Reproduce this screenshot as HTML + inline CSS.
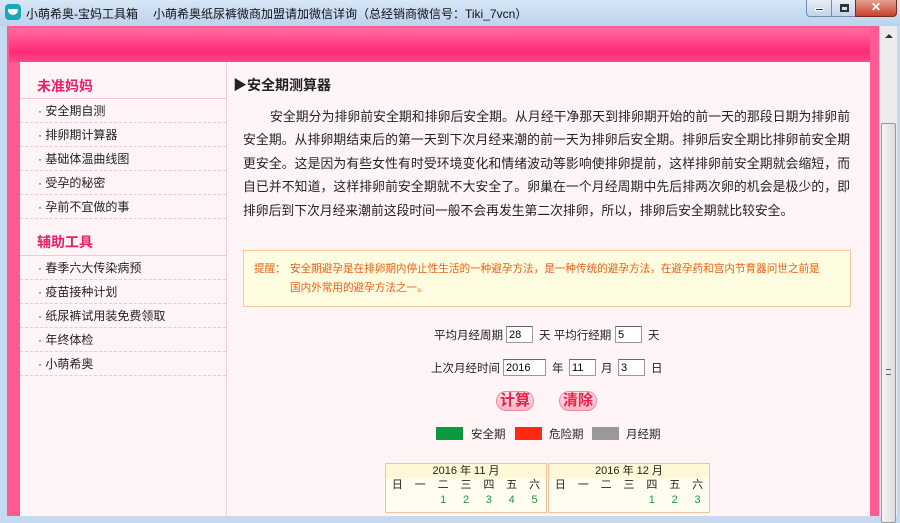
<!DOCTYPE html>
<html><head><meta charset="utf-8"><style>
*{margin:0;padding:0;box-sizing:border-box}
body{width:900px;height:506px;overflow:hidden;position:relative;background:#c5daf0;font-family:"Liberation Sans","Noto Sans CJK SC",sans-serif;color:#222}
.abs{position:absolute}
#title{left:0;top:0;width:900px;height:26px;background:linear-gradient(#d6e6f7,#bcd3ec)}
#title .t{top:5px;font-size:12px;color:#111;white-space:nowrap}
#frame{left:7px;top:26px;width:872px;height:490px;background:#ff5a91}
#hdr{left:9px;top:28px;width:861px;height:34px;background:linear-gradient(#ff6c9e,#ff2a78 70%,#ff4a88)}
#panel{left:20px;top:62px;width:850px;height:454px;background:#fff5f7}
#side{left:20px;top:62px;width:207px;height:454px;border-right:1px solid #f2cfd7}
.h{position:absolute;left:17px;font-size:14px;font-weight:bold;color:#e81f68}
.it{position:absolute;left:0;width:206px;height:24px;border-bottom:1px dashed #f5c6d2;font-size:12px;line-height:24px;padding-left:18px;color:#222}
.hl{position:absolute;left:0;width:206px;border-top:1px solid #f5c6d2}
#scroll{left:879px;top:26px;width:18px;height:490px;background:#ececec;border-left:1px solid #d8d8d8}
.body{left:243px;width:607px;font-size:12.8px;line-height:23.4px;color:#222}
.body div{text-align:justify;text-align-last:justify;height:23.4px;white-space:nowrap}
input{position:absolute;height:17px;border:1px solid #999;border-top-color:#666;font-size:11px;padding-left:2px;background:#fff;font-family:"Liberation Sans",sans-serif}
.lb{position:absolute;font-size:11.5px;white-space:nowrap}
.btn{position:absolute;width:38px;height:20px;border-radius:10px;background:linear-gradient(#ffe0e8,#ffb4c6);border:1px solid #f08aa6;color:#e8204a;font-weight:bold;font-size:15px;text-align:center;line-height:18px}
.cal{position:absolute;top:463px;width:162px;height:50px;border:1px solid #f2c39a;background:#fffdf0;font-size:11px}
.cal .hd{height:14px;background:#fff8d6;text-align:center;line-height:14px}
.cal .r{display:flex;height:15px;line-height:15px}
.cal .r span{flex:1;text-align:center}
.cal .g span{color:#1a9a3c}
</style></head><body>
<div id="title" class="abs">
 <div class="abs" style="left:5px;top:4px;width:16px;height:16px;border-radius:4px;background:#1aa8b8"><div style="margin:5px 3px;width:10px;height:6px;border-radius:0 0 5px 5px;background:#fff"></div></div>
 <div class="abs t" style="left:26px">小萌希奥-宝妈工具箱</div>
 <div class="abs t" style="left:153px">小萌希奥纸尿裤微商加盟请加微信详询（总经销商微信号：Tiki_7vcn）</div>
 <div class="abs" style="left:806px;top:0;width:26px;height:17px;border:1px solid #6f8bae;border-top:0;border-radius:0 0 0 4px;background:linear-gradient(#e6eef8,#c2d4ea)"><div style="margin:8px 8px 0;width:9px;height:3px;background:#333;border:1px solid #fff"></div></div>
 <div class="abs" style="left:831px;top:0;width:25px;height:17px;border:1px solid #6f8bae;border-top:0;background:linear-gradient(#e6eef8,#c2d4ea)"><div style="margin:4px 8px 0;width:9px;height:8px;border:2px solid #333;border-top-width:3px"></div></div>
 <div class="abs" style="left:855px;top:0;width:42px;height:17px;border:1px solid #7a2a20;border-top:0;border-radius:0 0 4px 0;background:linear-gradient(#e8a090,#c8402c);color:#fff;font-weight:bold;font-size:12px;text-align:center;line-height:15px">✕</div>
</div>
<div id="frame" class="abs"></div>
<div id="hdr" class="abs"></div>
<div id="panel" class="abs"></div>
<div id="side" class="abs">
 <div class="h" style="top:14px">未准妈妈</div>
 <div class="hl" style="top:36px"></div>
 <div class="it" style="top:37px">· 安全期自测</div>
 <div class="it" style="top:61px">· 排卵期计算器</div>
 <div class="it" style="top:85px">· 基础体温曲线图</div>
 <div class="it" style="top:109px">· 受孕的秘密</div>
 <div class="it" style="top:133px">· 孕前不宜做的事</div>
 <div class="h" style="top:170px">辅助工具</div>
 <div class="hl" style="top:193px"></div>
 <div class="it" style="top:194px">· 春季六大传染病预</div>
 <div class="it" style="top:218px">· 疫苗接种计划</div>
 <div class="it" style="top:242px">· 纸尿裤试用装免费领取</div>
 <div class="it" style="top:266px">· 年终体检</div>
 <div class="it" style="top:290px">· 小萌希奥</div>
</div>
<div class="abs" style="left:233px;top:75px;font-size:14px;font-weight:bold">▶安全期测算器</div>
<div class="abs body" style="top:105px">
<div><span style="padding-left:27px"></span>安全期分为排卵前安全期和排卵后安全期。从月经干净那天到排卵期开始的前一天的那段日期为排卵前</div>
<div>安全期。从排卵期结束后的第一天到下次月经来潮的前一天为排卵后安全期。排卵后安全期比排卵前安全期</div>
<div>更安全。这是因为有些女性有时受环境变化和情绪波动等影响使排卵提前，这样排卵前安全期就会缩短，而</div>
<div>自已并不知道，这样排卵前安全期就不大安全了。卵巢在一个月经周期中先后排两次卵的机会是极少的，即</div>
<div style="text-align-last:left">排卵后到下次月经来潮前这段时间一般不会再发生第二次排卵，所以，排卵后安全期就比较安全。</div>
</div>
<div class="abs" style="left:243px;top:250px;width:608px;height:57px;border:1px solid #f6c79c;background:#fffde0;font-size:10.6px;color:#e8601a;line-height:19px;padding:9px 0 0 10px">
 <div style="display:flex"><span style="width:36px;flex:none">提醒：</span><span style="width:560px;white-space:nowrap">安全期避孕是在排卵期内停止性生活的一种避孕方法，是一种传统的避孕方法，在避孕药和宫内节育器问世之前是<br>国内外常用的避孕方法之一。</span></div>
</div>
<div class="lb" style="left:434px;top:327px">平均月经周期</div>
<input style="left:506px;top:326px;width:27px" value="28">
<div class="lb" style="left:539px;top:327px">天 平均行经期</div>
<input style="left:615px;top:326px;width:27px" value="5">
<div class="lb" style="left:648px;top:327px">天</div>
<div class="lb" style="left:431px;top:360px">上次月经时间</div>
<input style="left:503px;top:359px;width:43px" value="2016">
<div class="lb" style="left:552px;top:360px">年</div>
<input style="left:569px;top:359px;width:27px" value="11">
<div class="lb" style="left:601px;top:360px">月</div>
<input style="left:618px;top:359px;width:27px" value="3">
<div class="lb" style="left:651px;top:360px">日</div>
<div class="btn" style="left:496px;top:391px">计算</div>
<div class="btn" style="left:559px;top:391px">清除</div>
<div class="abs" style="left:436px;top:427px;width:27px;height:13px;background:#0a9a3e"></div>
<div class="lb" style="left:471px;top:426px">安全期</div>
<div class="abs" style="left:515px;top:427px;width:27px;height:13px;background:#ff2a10"></div>
<div class="lb" style="left:549px;top:426px">危险期</div>
<div class="abs" style="left:592px;top:427px;width:27px;height:13px;background:#999"></div>
<div class="lb" style="left:626px;top:426px">月经期</div>
<div class="cal" style="left:385px"><div class="hd">2016 年 11 月</div>
<div class="r"><span>日</span><span>一</span><span>二</span><span>三</span><span>四</span><span>五</span><span>六</span></div>
<div class="r g"><span></span><span></span><span>1</span><span>2</span><span>3</span><span>4</span><span>5</span></div></div>
<div class="cal" style="left:548px"><div class="hd">2016 年 12 月</div>
<div class="r"><span>日</span><span>一</span><span>二</span><span>三</span><span>四</span><span>五</span><span>六</span></div>
<div class="r g"><span></span><span></span><span></span><span></span><span>1</span><span>2</span><span>3</span></div></div>
<div id="scroll" class="abs">
 <div style="position:absolute;left:5px;top:8px;width:0;height:0;border-left:4px solid transparent;border-right:4px solid transparent;border-bottom:4px solid #333"></div>
 <div style="position:absolute;left:1px;top:97px;width:15px;height:400px;border:1px solid #999;border-radius:2px;background:linear-gradient(90deg,#f4f4f4,#dcdcdc)"><div style="margin:245px 4px 0;height:6px;border-top:1px solid #666;border-bottom:1px solid #666"></div></div>
</div>
</body></html>
